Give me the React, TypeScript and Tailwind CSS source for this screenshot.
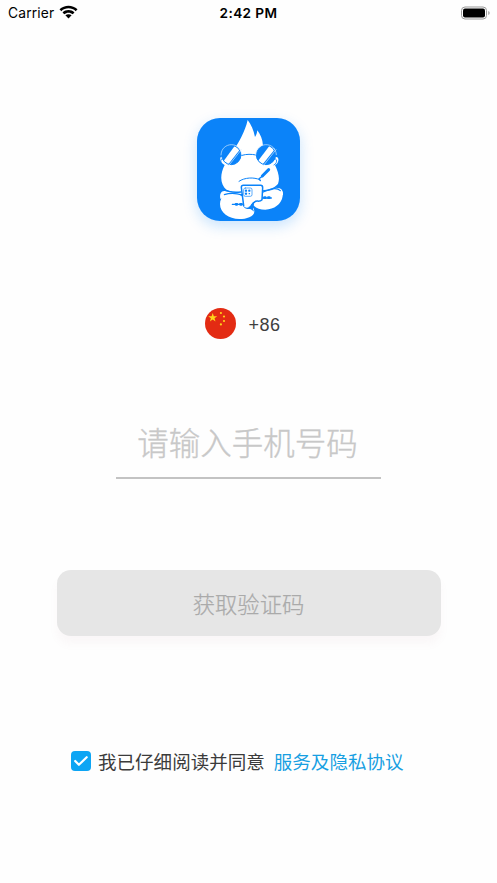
function StatusBar() {
  return (
    <header className="grid h-[26px] grid-cols-3 items-center pl-2 pr-[6px] font-['Inter','Liberation_Sans',sans-serif] text-black">
      <div className="flex items-center gap-[5px]">
        <span className="text-[13.8px] tracking-[0.15px]">Carrier</span>
        <svg className="mb-[2px] h-[14px] w-[19px]" viewBox="0 0 19 14">
          <path d="M.5 4.3C5.4-.6 13.6-.6 18.5 4.3L16.7 6.2C12.7 2.4 6.3 2.4 2.3 6.2Z" />
          <path d="M3.5 7.4C6.8 4.3 12.2 4.3 15.5 7.4L13.7 9.2C11.3 7.1 7.7 7.1 5.3 9.2Z" />
          <path d="M9.5 13.5 6.4 10.3C8.1 8.8 10.9 8.8 12.6 10.3Z" />
        </svg>
      </div>
      <span className="-ml-[2px] pt-px text-center text-[13.6px] font-semibold tracking-[0.4px]">2:42 PM</span>
      <svg className="mb-px h-[14px] w-[31px] justify-self-end" viewBox="0 0 31 14">
        <rect x="1.5" y="1" width="25" height="12" rx="3.5" fill="#fff" stroke="#999" />
        <rect x="3" y="2.5" width="22" height="9" rx="2" fill="#000" />
        <path d="M28.3 5v4c1.8-.7 1.8-3.3 0-4Z" fill="#999" />
      </svg>
    </header>
  );
}

function Logo() {
  return (
    <div className="h-[103px] w-[103px] overflow-hidden rounded-[23px] bg-[#0b83f9] shadow-[0_5px_14px_rgba(11,131,249,0.22)]">
      <svg className="h-full w-full" viewBox="51 40 309 309" fill="none" strokeLinecap="round" strokeLinejoin="round">
        <path
          fill="#fff"
          d="M166 130C176 112 195 82 203 46c10 13 18 30 22 51 4-5 6-12 7-20 9 12 16 27 17 46l8 20 30 14c10-2 11 13 3 21l-5 3c8 18 14 34 11 49-2 12-7 19-14 26-45 18-96 18-142 0-20-17-21-46-6-75-10-3-17-17-11-25l9 1 20-22Z"
        />
        <path fill="#fff" d="M121 282c-3-14 3-24 13-23l49 7-14 16Z" />
        <path fill="#fff" d="M309 271c1-12-5-21-14-20l-47 7 7 16Z" />
        <path
          fill="#fff"
          d="M133 273c20-12 52-6 66 14 12 15 25 22 24 34-1 15-24 22-45 22-32 0-58-19-58-45 0-12 5-20 13-25Z"
        />
        <path
          fill="#fff"
          d="M238 268c15-12 39-19 54-17 13 1 18 11 16 23-3 25-26 40-52 41-15 0-29-4-35-13 1-14 7-27 17-34Z"
        />
        <path stroke="#0b83f9" strokeWidth="3.5" d="M133 270c17-6 35-5 54 1M248 263c20-10 42-16 53-5" />
        <path stroke="#0b83f9" strokeWidth="4.5" d="M127 252c13 8 34 13 56 10M251 258c17 0 33-7 44-18" />
        <path stroke="#0b83f9" strokeWidth="3" d="M186 152c14-4 28-4 42-1M177 230c17-12 45-13 62-5" />
        <g>
          <circle cx="154" cy="151" r="29" fill="#0b83f9" />
          <path fill="#fff" d="m131 169 33-45 17 9-36 46Z" />
          <circle cx="154" cy="151" r="29" stroke="#0b83f9" strokeWidth="3" />
          <path stroke="#d5ecff" strokeWidth="2" d="M123 151c1-41 60-42 62-1M146 183l38-48" />
        </g>
        <g>
          <circle cx="258" cy="151" r="29" fill="#0b83f9" />
          <path fill="#fff" d="m234 169 34-45 17 9-37 46Z" />
          <circle cx="258" cy="151" r="29" stroke="#0b83f9" strokeWidth="3" />
          <path stroke="#d5ecff" strokeWidth="2" d="M227 151c1-41 60-42 62-1M250 183l38-48" />
        </g>
        <path stroke="#0b83f9" strokeWidth="2.5" d="M126 163c-7 1-3 15 5 19M286 163c8 1 4 15-4 18" />
        <path stroke="#0b83f9" strokeWidth="9" d="m247 214 19-19" />
        <path stroke="#0b83f9" strokeWidth="4" d="m241 228-4-6 12-9" />
        <path fill="#fff" d="M190 242h52c4 0 6 3 6 7l-2 36c-7 9-18 0-23 8-7 4-3 17-15 15h-15l-9-60c0-4 2-6 6-6Z" />
        <path
          stroke="#0b83f9"
          strokeWidth="4.5"
          d="M191 303l-7-55c0-4 2-6 6-6h52c4 0 6 3 6 7l-2 36c-7 9-18 0-23 8-9 3-4 16-15 15"
        />
        <path fill="#0b83f9" d="M190 302c5 10 13 7 18 6 4-4 5-13 15-15l-4 10c-1 10 2 15 4 18-7-4-9-9-15-8-8 1-18-2-18-11Z" />
        <rect x="191" y="250" width="25" height="25" rx="5" stroke="#0b83f9" strokeWidth="2" />
        <g fill="#0b83f9">
          <circle cx="198" cy="258" r="3.5" />
          <circle cx="208" cy="258" r="3.5" />
          <circle cx="198" cy="267" r="3.5" />
          <path d="M206 265h4v4h-4z" />
        </g>
        <path stroke="#0b83f9" strokeWidth="4" d="M157 299h28M248 280h26" />
        <path stroke="#0b83f9" strokeWidth="8" d="M168 299h3M181 299h4M253 279h3M265 279h3" />
      </svg>
    </div>
  );
}

function ChinaFlag() {
  return (
    <svg className="h-[31px] w-[31px]" viewBox="0 0 31 31">
      <circle cx="15.5" cy="15.5" r="15.5" fill="#e32b13" />
      <g fill="#ffd51b">
        <path d="m7.7 5 1.1 3.3h3.4l-2.7 2 1 3.3-2.8-2-2.8 2 1-3.3-2.7-2h3.4Z" />
        <circle cx="15.9" cy="5" r="1.1" />
        <circle cx="19" cy="8.5" r="1.1" />
        <circle cx="19" cy="13" r="1.1" />
        <circle cx="15.9" cy="16.4" r="1.1" />
      </g>
    </svg>
  );
}

export default function App() {
  return (
    <main className="flex h-[883px] w-full flex-col overflow-hidden bg-[#fefefe] font-['Noto_Sans_CJK_SC',sans-serif]">
      <StatusBar />
      <div className="mt-[92px] flex justify-center">
        <Logo />
      </div>

      <button className="ml-[205px] mt-[87px] flex h-[31px] items-center gap-[12.5px] self-start">
        <ChinaFlag />
        <span className="pt-[3px] font-['Liberation_Sans',sans-serif] text-[18px] leading-none tracking-[0.5px] text-[#3f3f3f]">+86</span>
      </button>

      <div className="mx-auto mt-[80px] h-[60px] w-[265px] border-b-2 border-[#c3c3c3]">
        <input
          aria-label="请输入手机号码"
          placeholder="请输入手机号码"
          className="h-[46px] w-full pr-[2px] text-center text-[31.5px] font-light text-[#444] outline-none [-webkit-text-stroke:0.35px_#c8c8c8] placeholder:text-[#c8c8c8]"
        />
      </div>

      <button className="ml-[56.5px] mt-[90.5px] flex h-[66px] w-[384px] items-center justify-center rounded-[14px] bg-[#e6e6e6] pt-[2px] text-[22.3px] font-light text-[#aaa] shadow-[0_8px_8px_rgba(170,110,140,0.05)] [-webkit-text-stroke:0.25px_#aaa]">
        获取验证码
      </button>

      <div className="ml-[71px] mt-[115.5px] flex h-5 items-center whitespace-nowrap text-[18.55px] leading-5">
        <span className="flex h-5 w-5 items-center justify-center rounded-[4px] bg-[#0da5f4]">
          <svg className="h-[14px] w-4" viewBox="0 0 16 14" fill="none" stroke="#fff" strokeWidth="2.2" strokeLinecap="round" strokeLinejoin="round">
            <path d="m2.2 7 3.7 3.8 7.8-7.6" />
          </svg>
        </span>
        <span className="ml-[7px] text-[#3b3b3b]">我已仔细阅读并同意</span>
        <a className="ml-[9px] text-[#179fe2]">服务及隐私协议</a>
      </div>
    </main>
  );
}
